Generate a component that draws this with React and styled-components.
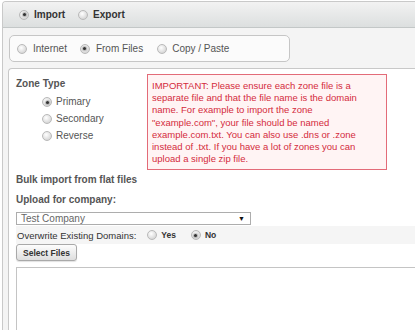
import React from 'react';
import styled, { createGlobalStyle } from 'styled-components';

const GlobalStyle = createGlobalStyle`
  html, body {
    margin: 0;
    padding: 0;
    background: #ffffff;
    overflow: hidden;
  }
  body {
    font-family: "Liberation Sans", Arial, sans-serif;
    color: #555;
  }
`;

const Widget = styled.div`
  height: 328px;
  margin: 1px 0 0 2px;
  border: 1px solid #c9c9c9;
  border-right: none;
  border-bottom: none;
  border-radius: 4px 0 0 0;
  background: #f4f4f4;
  overflow: hidden;
`;

const TabBar = styled.div`
  height: 25px;
  display: flex;
  align-items: center;
  padding-left: 16px;
  background: linear-gradient(#f2f2f2, #dcdfdf);
  border-bottom: 1px solid #c3c7c7;
`;

const Option = styled.label`
  display: flex;
  align-items: center;
  gap: ${p => p.$gap || 5}px;
  margin-right: ${p => p.$space || 0}px;
  font-size: ${p => p.$size || 10}px;
  font-weight: ${p => (p.$bold ? 'bold' : 'normal')};
  color: ${p => p.$color || '#555'};
  line-height: 12px;
  white-space: nowrap;
`;

const Radio = styled.span`
  width: 8px;
  height: 8px;
  border-radius: 50%;
  border: 1px solid #b9b9b9;
  background: radial-gradient(circle at 40% 35%, #ffffff, #d4d4d4 80%);
  display: flex;
  align-items: center;
  justify-content: center;
  flex-shrink: 0;

  &::after {
    content: '';
    width: 3px;
    height: 3px;
    border-radius: 50%;
    background: #333;
    box-shadow: 0 0 1px 1px rgba(80, 80, 80, 0.35);
    display: ${p => (p.$checked ? 'block' : 'none')};
  }
`;

const SourceBox = styled.div`
  width: 272px;
  height: 25px;
  margin: 7px 0 0 6px;
  border: 1px solid #c6c6c6;
  border-radius: 5px;
  background: #fbfbfb;
  display: flex;
  align-items: center;
  padding-left: 7px;
`;

const Panel = styled.div`
  margin: 6px 0 0 5px;
  border: 1px solid #c8c8c8;
  border-right: none;
  border-radius: 4px 0 0 0;
  background: #ffffff;
  padding: 5px 0 0 7px;
  height: 300px;
`;

const ZoneRow = styled.div`
  display: flex;
`;

const ZoneColumn = styled.div`
  width: 131px;
  padding-top: 4px;
`;

const Heading = styled.div`
  font-size: 10px;
  font-weight: bold;
  color: #555;
  line-height: 12px;
  margin-top: ${p => p.$top || 0}px;
`;

const RadioList = styled.div`
  display: flex;
  flex-direction: column;
  gap: 5px;
  margin: 6px 0 0 26px;
`;

const Notice = styled.div`
  width: 230px;
  border: 1px solid #e36b78;
  background: #fff4f4;
  color: #d42b3c;
  font-size: 9.5px;
  line-height: 12.2px;
  padding: 5px 4px 4px 4px;
  white-space: nowrap;
`;

const Select = styled.div`
  width: 224px;
  height: 11px;
  margin-top: 6px;
  border: 1px solid #adadad;
  display: flex;
  align-items: center;
  justify-content: space-between;
  padding: 0 5px 0 4px;
  font-size: 10px;
  color: #666;
`;

const Arrow = styled.span`
  font-size: 7px;
  color: #111;
`;

const OverwriteRow = styled.div`
  height: 18px;
  margin-top: 1px;
  display: flex;
  align-items: center;
  padding-left: 1px;
  background: #f5f5f5;
`;

const RowLabel = styled.span`
  font-size: 9.5px;
  color: #333;
  margin-right: 11px;
`;

const Button = styled.button`
  display: block;
  margin-top: 0;
  height: 17px;
  width: 61px;
  padding: 0;
  border: 1px solid #a9a9a9;
  border-radius: 3px;
  background: linear-gradient(#fdfdfd, #dedede);
  font-family: "Liberation Sans", Arial, sans-serif;
  font-size: 8.5px;
  font-weight: bold;
  color: #333;
  box-shadow: 0 1px 1px rgba(0, 0, 0, 0.12);
`;

const DropZone = styled.div`
  margin-top: 6px;
  height: 80px;
  border: 1px solid #c4c4c4;
  border-right: none;
  background: #fff;
`;

const noticeLines = [
  'IMPORTANT: Please ensure each zone file is a',
  'separate file and that the file name is the domain',
  'name. For example to import the zone',
  '"example.com", your file should be named',
  'example.com.txt. You can also use .dns or .zone',
  'instead of .txt. If you have a lot of zones you can',
  'upload a single zip file.',
];

export default function App() {
  return (
    <>
      <GlobalStyle />
      <Widget>
        <TabBar>
          <Option $bold $color="#333" $gap={5} $space={13}>
            <Radio $checked />
            Import
          </Option>
          <Option $bold $color="#333" $gap={5}>
            <Radio />
            Export
          </Option>
        </TabBar>

        <SourceBox>
          <Option $space={13} $gap={6}>
            <Radio />
            Internet
          </Option>
          <Option $space={14} $gap={6}>
            <Radio $checked />
            From Files
          </Option>
          <Option $gap={5}>
            <Radio />
            Copy / Paste
          </Option>
        </SourceBox>

        <Panel>
          <ZoneRow>
            <ZoneColumn>
              <Heading>Zone Type</Heading>
              <RadioList>
                <Option $gap={4}>
                  <Radio $checked />
                  Primary
                </Option>
                <Option $gap={4}>
                  <Radio />
                  Secondary
                </Option>
                <Option $gap={4}>
                  <Radio />
                  Reverse
                </Option>
              </RadioList>
            </ZoneColumn>
            <Notice>
              {noticeLines.map((line, i) => (
                <div key={i}>{line}</div>
              ))}
            </Notice>
          </ZoneRow>

          <Heading $top={4}>Bulk import from flat files</Heading>
          <Heading $top={8}>Upload for company:</Heading>
          <Select>
            Test Company
            <Arrow>▼</Arrow>
          </Select>

          <OverwriteRow>
            <RowLabel>Overwrite Existing Domains:</RowLabel>
            <Option $bold $size={8.5} $color="#333" $gap={4} $space={15}>
              <Radio />
              Yes
            </Option>
            <Option $bold $size={8.5} $color="#333" $gap={4}>
              <Radio $checked />
              No
            </Option>
          </OverwriteRow>

          <Button>Select Files</Button>
          <DropZone />
        </Panel>
      </Widget>
    </>
  );
}
